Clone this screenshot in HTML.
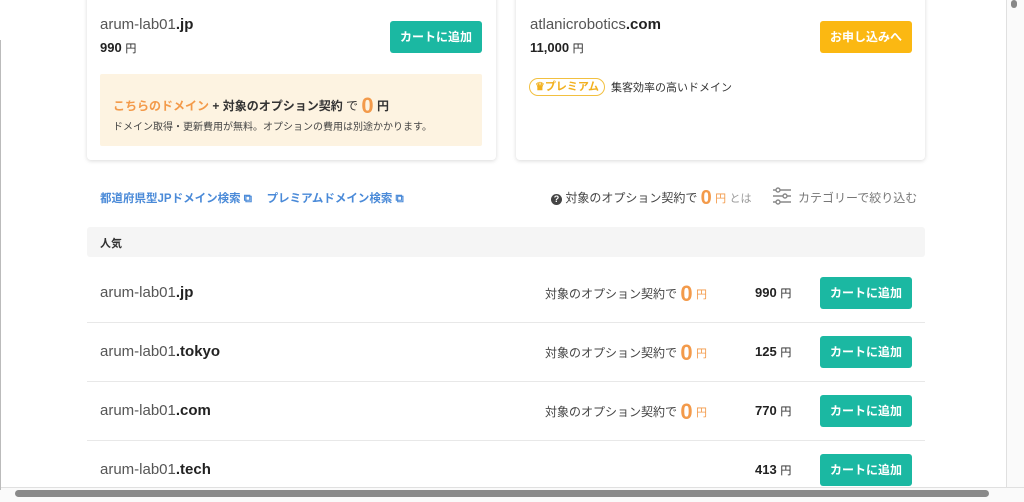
<!DOCTYPE html><html><head><meta charset="utf-8"><style>
body{margin:0;width:1024px;height:501px;overflow:hidden;background:#fff;font-family:"Liberation Sans","Noto Sans CJK JP",sans-serif;color:#333;position:relative}
.a{position:absolute}
.card{position:absolute;top:-10px;height:170px;background:#fff;border-radius:4px;box-shadow:0 1px 4px rgba(0,0,0,.15)}
.dom{font-size:15px;color:#555}.dom b{color:#222}
.pr{font-size:13px;font-weight:bold;color:#222}.pr span{font-size:11px;font-weight:normal}
.btn{position:absolute;width:92px;height:32px;border-radius:3px;background:#1bb8a2;color:#fff;font-size:12px;font-weight:bold;text-align:center;line-height:32px}
.line{position:absolute;left:87px;width:838px;height:1px;background:#e8e8e8}
.opt{position:absolute;left:545px;font-size:12px;color:#444}
.opt b{color:#f39a4a;font-size:22px;vertical-align:-3px}.opt i{font-style:normal;color:#f39a4a;font-size:11px}
.rp{position:absolute;left:755px;font-size:13px;font-weight:bold;color:#222}.rp span{font-size:11px;font-weight:normal}
</style></head><body>
<div class="card" style="left:87px;width:409px"></div>
<div class="card" style="left:516px;width:409px"></div>
<div class="a dom" style="left:100px;top:16px">arum-lab01<b>.jp</b></div>
<div class="a pr" style="left:100px;top:40px">990 <span>円</span></div>
<div class="btn" style="left:390px;top:21px">カートに追加</div>
<div class="a" style="left:100px;top:74px;width:382px;height:72px;background:#fdf3e1;border-radius:2px"></div>
<div class="a" style="left:113px;top:93px;font-size:12px;font-weight:bold"><span style="color:#f39a4a">こちらのドメイン</span> + 対象のオプション契約 <span style="font-weight:normal">で</span> <span style="color:#f39a4a;font-size:22px;vertical-align:-3px">0</span> 円</div>
<div class="a" style="left:113px;top:118px;font-size:10px;color:#444">ドメイン取得・更新費用が無料。オプションの費用は別途かかります。</div>
<div class="a dom" style="left:530px;top:16px">atlanicrobotics<b>.com</b></div>
<div class="a pr" style="left:530px;top:40px">11,000 <span>円</span></div>
<div class="btn" style="left:820px;top:21px;background:#fbb812">お申し込みへ</div>
<div class="a" style="left:529px;top:78px;width:74px;height:16px;border:1px solid #f2c040;border-radius:9px;font-size:11px;font-weight:bold;color:#f2b01e;text-align:center;line-height:16px">♛プレミアム</div>
<div class="a" style="left:611px;top:79px;font-size:11px;color:#333">集客効率の高いドメイン</div>
<div class="a" style="left:100px;top:190px;font-size:11.5px;font-weight:bold;color:#4a8ad8">都道府県型JPドメイン検索 ⧉　 プレミアムドメイン検索 ⧉</div>
<div class="a" style="left:551px;top:187px;font-size:12px;color:#444"><span style="display:inline-block;width:11px;height:11px;border-radius:50%;background:#444;color:#fff;font-size:9px;text-align:center;line-height:11px;font-weight:bold">?</span> 対象のオプション契約で <b style="color:#f39a4a;font-size:20px;vertical-align:-2px">0</b> <span style="color:#f39a4a;font-size:11px">円</span> <span style="color:#999;font-size:11px">とは</span></div>
<svg class="a" style="left:772px;top:186px" width="20" height="20" viewBox="0 0 20 20" fill="none" stroke="#888" stroke-width="1.4"><path d="M1 4h18M1 10h18M1 16h18"/><circle cx="6" cy="4" r="2" fill="#fff"/><circle cx="13" cy="10" r="2" fill="#fff"/><circle cx="6" cy="16" r="2" fill="#fff"/></svg>
<div class="a" style="left:798px;top:189px;font-size:12px;color:#777">カテゴリーで絞り込む</div>
<div class="a" style="left:87px;top:227px;width:838px;height:30px;background:#f5f5f5;border-radius:3px"></div>
<div class="a" style="left:100px;top:235px;font-size:11px;font-weight:bold">人気</div>
<div class="a dom" style="left:100px;top:284px">arum-lab01<b>.jp</b></div>
<div class="opt" style="top:281px">対象のオプション契約で <b>0</b> <i>円</i></div>
<div class="rp" style="top:285px">990 <span>円</span></div>
<div class="btn" style="left:820px;top:277px">カートに追加</div>
<div class="line" style="top:322px"></div>
<div class="a dom" style="left:100px;top:343px">arum-lab01<b>.tokyo</b></div>
<div class="opt" style="top:340px">対象のオプション契約で <b>0</b> <i>円</i></div>
<div class="rp" style="top:344px">125 <span>円</span></div>
<div class="btn" style="left:820px;top:336px">カートに追加</div>
<div class="line" style="top:381px"></div>
<div class="a dom" style="left:100px;top:402px">arum-lab01<b>.com</b></div>
<div class="opt" style="top:399px">対象のオプション契約で <b>0</b> <i>円</i></div>
<div class="rp" style="top:403px">770 <span>円</span></div>
<div class="btn" style="left:820px;top:395px">カートに追加</div>
<div class="line" style="top:440px"></div>
<div class="a dom" style="left:100px;top:461px">arum-lab01<b>.tech</b></div>
<div class="rp" style="top:462px">413 <span>円</span></div>
<div class="btn" style="left:820px;top:454px">カートに追加</div>
<div class="a" style="left:1006px;top:0;width:18px;height:501px;background:#fafafa;border-left:1px solid #e0e0e0"></div>
<div class="a" style="left:1011px;top:0;width:6px;height:8px;background:#888;border-radius:3px"></div>
<div class="a" style="left:0;top:487px;width:1024px;height:14px;background:#fafafa;border-top:1px solid #e0e0e0"></div>
<div class="a" style="left:15px;top:490px;width:974px;height:7px;background:#8a8a8a;border-radius:4px"></div>
<div class="a" style="left:0;top:40px;width:1px;height:450px;background:#bbb"></div>
</body></html>
